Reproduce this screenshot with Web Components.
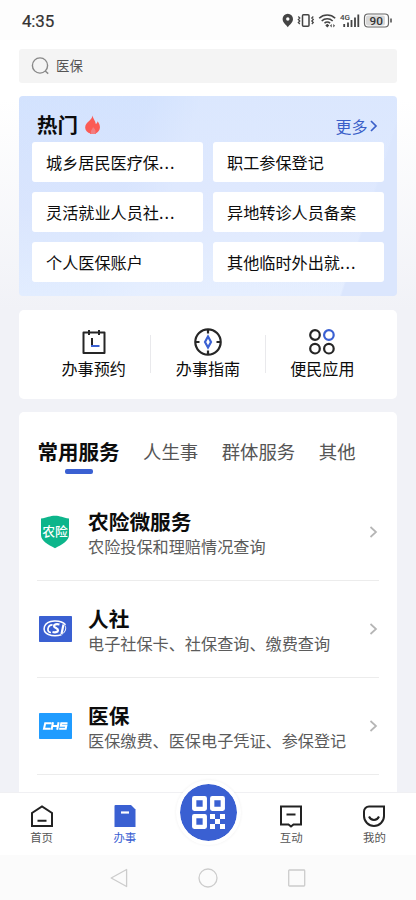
<!DOCTYPE html>
<html lang="zh-CN">
<head>
<meta charset="utf-8">
<title>办事</title>
<style>
html,body{margin:0;height:100%}
body{font-family:"Noto Sans CJK SC",sans-serif;color:#0c0c0c;overflow:hidden}
</style>
</head>
<body>
<service-app></service-app>
<script>
const define = (name, html) => {
  const t = document.createElement('template');
  t.innerHTML = html;
  customElements.define(name, class extends HTMLElement {
    constructor() {
      super();
      this.attachShadow({mode: 'open'}).append(t.content.cloneNode(true));
    }
  });
};

define('status-bar', `<style>
:host{display:flex;height:40px;flex:none;background:#fdfdfd;align-items:center;justify-content:space-between;padding:2px 23px 0 22px;box-sizing:border-box}
time{font:400 17px/20px Roboto,sans-serif;color:#333;letter-spacing:-.2px;-webkit-text-stroke:.2px #333}
svg{display:block}
</style><time>4:35</time>
<svg width="112" height="18" viewBox="281 12 112 18" fill="none" stroke="#444" stroke-width="1.5">
<path d="M287.800 13.800a5.200 5.200 0 0 0-5.200 5.200c0 3.600 3.400 5.600 5.200 8.200 1.800-2.600 5.200-4.600 5.200-8.200a5.200 5.200 0 0 0-5.200-5.200z" fill="#444" stroke="none"/><circle cx="287.800" cy="19" r="1.700" fill="#fff" stroke="none"/>
<rect x="302.500" y="14.800" width="6.500" height="11.500" rx="1"/>
<path d="M298.300 16.500l1.500 1.500-1.500 1.500 1.500 1.500-1.500 1.500 1.500 1.500M313.300 16.500l-1.500 1.500 1.500 1.500-1.500 1.500 1.500 1.500-1.500 1.500" stroke-width="1.200"/>
<path d="M319.200 18.300a11.500 11.500 0 0 1 16 0M321.700 21a8 8 0 0 1 11 0M324.500 23.300a4 4 0 0 1 5.600 0" stroke-width="1.600"/>
<path d="M325.300 25.500l2-1.700 2 1.700-2 2zM330 25.700l1.700-1.700v3.400zM335 25.700l-1.700-1.700v3.400z" fill="#444" stroke="none"/>
<path d="M344.200 24v3M348 22.500V27M351.500 20v7M355 17.500V27M358.300 14.500V27" stroke-width="1.800"/>
<text x="340" y="19.900" font-family="Roboto" font-weight="500" font-size="8" fill="#444" stroke="none">4G</text>
<rect x="364.500" y="14" width="24" height="13" rx="3.500" fill="#fff" stroke="#666" stroke-width="1.200"/><rect x="366" y="15.400" width="19" height="10.200" rx="2" fill="#d8d8d8" stroke="none"/>
<path d="M391 18.500v4" stroke="#666" stroke-width="1.800"/>
<text x="369.600" y="24.800" font-family="Roboto" font-weight="500" font-size="11.800" fill="#333" stroke="none">90</text>
</svg>`);

define('search-box', `<style>
:host{display:flex;height:34px;flex:none;margin:9px 19px 0;background:#f4f4f4;border-radius:3px;align-items:center;padding-left:12px;gap:7px;font-size:13.400px;line-height:20px;color:#555;box-sizing:border-box;padding-bottom:2px}
</style><svg width="18" height="19" viewBox="0 0 18 19" fill="none" stroke="#888" stroke-width="1.400"><circle cx="9" cy="9.500" r="7.600"/><path d="M14.200 15l3 2.600"/></svg><slot></slot>`);

define('hot-item', `<style>
:host{display:flex;align-items:center;background:#fff;border-radius:3px;padding:0 0 0 14px;font-size:16.150px;line-height:24px;white-space:nowrap}
::slotted(i){font-style:normal;letter-spacing:1px}
</style><slot></slot>`);

define('hot-card', `<style>
:host{display:flex;flex-direction:column;box-sizing:border-box;flex:none;height:200px;margin:13px 19px 0;border-radius:4px;padding:14px 13px;
background:linear-gradient(108deg,#e4ebfe00 87%,#dbe6fd 87.500%),linear-gradient(107deg,#cfdfff44 0 30%,#e2ebff77 42%),linear-gradient(#d5e4fe,#dde7fd 55%,#e9f2ff)}
header{display:flex;height:32px;align-items:center;padding:0 6px 0 5px}
h2{margin:-5px 0 0;font-size:20.500px;line-height:28px;font-weight:700}
.fire{margin:-2px 0 0 6px}
a{margin-left:auto;font-size:16px;line-height:22px;color:#3a5fc8;display:flex;align-items:center;gap:2px;position:relative;left:-.5px}
.grid{flex:1;display:grid;grid-template-columns:1fr 1fr;grid-template-rows:repeat(3,1fr);gap:9.500px 10px}
</style><header><h2>热门</h2>
<svg class="fire" width="17" height="20" viewBox="0 0 17 20"><path d="M8.500.5C9 4 11.500 5.800 11.800 9c1.200-.5 1.700-1.500 1.700-2.700 4.200 5.200 2.700 10.400-2.200 12.400.8-2.700-.2-4.700-2.300-6.700-.2 2-3 3.500-2 6.700C1.300 17-.2 12.500 2.400 8.800 4 6.500 8 4.500 8.500.5z" fill="#fb5b55"/><path d="M6 12h6v7H6z" fill="#fb5b55" opacity=".75"/></svg>
<a>更多<svg width="8" height="14" viewBox="0 0 8 14" fill="none" stroke="#3a5fc8" stroke-width="1.700"><path d="M1 2l5 5-5 5"/></svg></a></header>
<div class="grid"><slot></slot></div>`);

define('quick-item', `<style>
:host{flex:1;display:flex;flex-direction:column;align-items:center;font-size:16.100px;line-height:24px;position:relative;left:-.5px}
:host(:not(:last-child))::after{content:"";position:absolute;right:-.5px;top:25px;width:1px;height:38px;background:#e9e9ec}
div{height:28px;margin-top:18px;display:flex;align-items:center}
</style><div><slot name="icon"></slot></div><slot></slot>`);

define('quick-card', `<style>
:host{display:flex;flex:none;height:89px;margin:14px 19px 0;border-radius:5px;background:#fff;padding:0 17px 0 18px;box-sizing:border-box}
</style><slot></slot>`);

define('service-tabs', `<style>
:host{display:flex;height:62px;align-items:flex-start;font-size:18.400px;line-height:28px;color:#555;padding:25px 0 0 18.500px;box-sizing:border-box;white-space:nowrap;gap:23.500px}
b{font-size:20.500px;color:#0c0c0c;position:relative}
b::after{content:"";position:absolute;left:27px;top:32px;width:28px;height:4.500px;border-radius:2px;background:#3a60d2}
</style><b>常用服务</b><span>人生事</span><span>群体服务</span><span>其他</span>`);

define('service-row', `<style>
:host{display:flex;box-sizing:border-box;height:97px;margin:0 18px;border-bottom:1px solid #ececec;align-items:center}
.logo{width:36px;display:flex;justify-content:center;margin-right:15px}
.copy{flex:1;white-space:nowrap;padding-top:1px}
h3{margin:0;font-size:20.700px;line-height:26px;font-weight:700}
p{margin:0;font-size:16.150px;line-height:24px;color:#5b5b5b}
.go{margin-right:1px}
</style><div class="logo"><slot name="logo"></slot></div>
<div class="copy"><h3><slot name="title"></slot></h3><p><slot></slot></p></div>
<svg class="go" width="9" height="14" viewBox="0 0 9 14" fill="none" stroke="#b5b5b5" stroke-width="1.700"><path d="M1.500 2l5.500 5-5.500 5"/></svg>`);

define('service-card', `<style>
:host{display:block;flex:1;min-height:0;overflow:hidden;margin:13px 19px 0;border-radius:5px 5px 0 0;background:#fff}
.rows{padding-top:10px}
</style><service-tabs></service-tabs><div class="rows"><slot></slot></div>`);

define('tab-item', `<style>
:host{flex:1;display:flex;flex-direction:column;align-items:center;font-size:11.400px;line-height:16px;color:#555}
:host([active]){color:#3a60d2}
div{height:26px;margin:10px 0 0;display:flex;align-items:center}
</style><div><slot name="icon"></slot></div><slot></slot>`);

define('scan-button', `<style>
:host{flex:1;display:flex;justify-content:center;position:relative}
div{position:absolute;top:-13.500px;width:57px;height:57px;border:4.500px solid #fff;border-radius:50%;background:#3a60d2;background-clip:padding-box;display:flex;align-items:center;justify-content:center;box-shadow:0 0 3px #0001}
</style><div><svg width="33" height="33" viewBox="0 0 33 33"><g fill="none" stroke="#fff" stroke-width="4.300" stroke-linejoin="round"><path d="M2.200 2.200h10.600v10.600H2.200zM20.200 2.200h10.600v10.600H20.200zM2.200 20.200h10.600v10.600H2.200z"/></g><path d="M18 18h5v5h-5zM28 18h5v5h-5zM23 23h5v5h-5zM18 28h5v5h-5zM28 28h5v5h-5z" fill="#fff"/></svg></div>`);

define('tab-bar', `<style>
:host{display:flex;height:62px;flex:none;background:#fff;border-top:1px solid #f0f0f3}
</style><slot></slot>`);

define('system-nav', `<style>
:host{display:flex;height:45px;flex:none;background:#fbfbfb;justify-content:center;align-items:center;gap:69px}
</style>
<svg width="20" height="20" viewBox="0 0 20 20" fill="none" stroke="#ccc" stroke-width="1.300"><path d="M17.600 1.500v17L2.200 10z" stroke-linejoin="round"/></svg>
<svg width="20" height="20" viewBox="0 0 20 20" fill="none" stroke="#ccc" stroke-width="1.300"><circle cx="10" cy="10" r="9"/></svg>
<svg width="20" height="20" viewBox="0 0 20 20" fill="none" stroke="#ccc" stroke-width="1.300"><rect x="1.700" y="2" width="16" height="16" rx=".7"/></svg>`);

define('service-app', `<style>
:host{display:flex;flex-direction:column;width:416px;height:900px;background:linear-gradient(#fff 100px,#f1f2f7 310px)}
</style>
<status-bar></status-bar>
<search-box>医保</search-box>
<hot-card>
<hot-item>城乡居民医疗保<i>...</i></hot-item><hot-item>职工参保登记</hot-item>
<hot-item>灵活就业人员社<i>...</i></hot-item><hot-item>异地转诊人员备案</hot-item>
<hot-item>个人医保账户</hot-item><hot-item>其他临时外出就<i>...</i></hot-item>
</hot-card>
<quick-card>
<quick-item><svg slot="icon" width="26" height="28" viewBox="0 0 26 28" fill="none" stroke="#262626" stroke-width="2"><path d="M2.500 4.500h21v20.500h-21zM8 2v5M18 2v5" stroke-linejoin="round"/><path d="M11 10v8"/><path d="M10 18h8.500" stroke="#3a60d2"/></svg>办事预约</quick-item>
<quick-item><svg slot="icon" width="28" height="28" viewBox="0 0 28 28" fill="none" stroke="#262626" stroke-width="2.200"><circle cx="14" cy="14" r="12.700"/><path d="M14 1v4.500M14 22.500V27M1 14h4.500M22.500 14H27"/><path d="M14 8.500l3 5.500-3 5.500-3-5.500z" stroke="#3a60d2"/></svg>办事指南</quick-item>
<quick-item><svg slot="icon" width="28" height="28" viewBox="0 0 28 28" fill="none" stroke="#262626" stroke-width="2.200"><circle cx="7" cy="7" r="4.800"/><circle cx="7" cy="20.700" r="4.800"/><circle cx="20.900" cy="20.700" r="4.800"/><circle cx="20.900" cy="7" r="4.800" stroke="#3a60d2"/></svg>便民应用</quick-item>
</quick-card>
<service-card>
<service-row><svg slot="logo" width="30" height="34" viewBox="0 0 30 34"><path d="M1 3.500C7 2.800 10 .8 15 .8s8 2 14 2.700v16.500c0 6-7 9.500-14 13.200C8 29.500 1 26 1 20z" fill="#0db58b"/><text x="15" y="20.700" text-anchor="middle" font-family="Noto Sans CJK SC" font-weight="500" font-size="12.800" fill="#fff">农险</text></svg><span slot="title">农险微服务</span>农险投保和理赔情况查询</service-row>
<service-row><svg slot="logo" width="33" height="26" viewBox="0 0 33 26"><rect width="33" height="26" rx=".7" fill="#3a60d2"/><g fill="none" stroke="#fff"><path d="M26.500 8.800C22 3.500 8 3.500 5.500 10.500 3 18 13 21.500 22.500 18.800" stroke-width="1.500"/><path d="M13.500 8.800c-5 0-6.500 7.500-1.500 7.700" stroke-width="1.700"/><path d="M20.500 8.500c-3-.8-5.500-.2-5.500 1.500 0 2.300 4.500 2 4 4.500-.3 2-3.200 2-5.500 1.500" stroke-width="2.200"/><path d="M24.500 8.500l-2 9.500" stroke-width="2.200"/><path d="M26 9.500c1.500 3 .5 6-2.500 8.500"/></g></svg><span slot="title">人社</span>电子社保卡、社保查询、缴费查询</service-row>
<service-row><svg slot="logo" width="33" height="26" viewBox="0 0 33 26"><rect width="33" height="26" rx=".7" fill="#209cff"/><path d="M12.500 10.300H6.200L5 15.700h6.500M14 9.300l-1.400 7.400M14 13h4.500M19.600 9.300l-1.400 7.400M28.500 10.300h-6.200l-.5 2.500h5.500l-.6 2.900h-6.500" fill="none" stroke="#fff" stroke-width="2"/></svg><span slot="title">医保</span>医保缴费、医保电子凭证、参保登记</service-row>
</service-card>
<tab-bar>
<tab-item><svg slot="icon" width="24" height="24" viewBox="0 0 24 24" fill="none" stroke="#222" stroke-width="2"><path d="M2 22V9l10-6.500L22 9v13zM7.500 16.700h9"/></svg>首页</tab-item>
<tab-item active><svg slot="icon" width="24" height="24" viewBox="0 0 24 24"><path d="M2.500 1h15.500l4.500 4.500V23h-21V2q0-1 1-1z" fill="#3a60d2"/><path d="M8 8.500h8" stroke="#fff" stroke-width="2.200"/></svg>办事</tab-item>
<scan-button></scan-button>
<tab-item><svg slot="icon" width="24" height="24" viewBox="0 0 24 24" fill="none" stroke="#222" stroke-width="2"><path d="M2 2.500h20v18h-7.500L12 22.500l-2.500-2H2zM7.500 10.500h9"/></svg>互动</tab-item>
<tab-item><svg slot="icon" width="24" height="24" viewBox="0 0 24 24" fill="none" stroke="#222" stroke-width="2"><path d="M7 2.500h15V12a10 10 0 0 1-20 0V7.500a5 5 0 0 1 5-5zM7 12.500c2 4.500 8 4.500 10 0"/></svg>我的</tab-item>
</tab-bar>
<system-nav></system-nav>`);
</script>
</body>
</html>
